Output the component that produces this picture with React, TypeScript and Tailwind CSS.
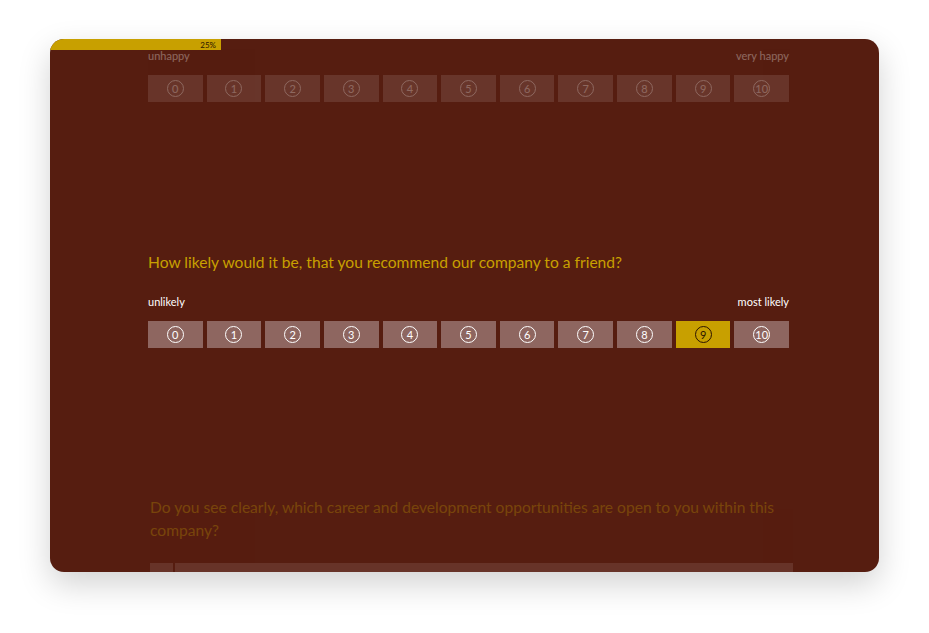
import { useState } from "react";

const scale = [0, 1, 2, 3, 4, 5, 6, 7, 8, 9, 10];

function Scale({ low, high, value, onPick }: { low: string; high: string; value?: number; onPick?: (n: number) => void }) {
  return (
    <div>
      <div className="flex justify-between text-[11px] leading-4 text-white">
        <span>{low}</span>
        <span>{high}</span>
      </div>
      <div className="mt-[11px] flex gap-[4px]">
        {scale.map((n) => {
          const active = n === value;
          return (
            <button
              key={n}
              onClick={() => onPick?.(n)}
              className={
                "flex h-[27px] flex-1 items-center justify-center " +
                (active ? "bg-[#c8a000]" : "bg-[#8e6660]")
              }
            >
              <span
                className={
                  "flex h-[17px] w-[17px] items-center justify-center rounded-full border-[1.5px] text-[11px] leading-none " +
                  (active ? "border-[#2b1400] text-[#2b1400]" : "border-white text-white")
                }
              >
                {n}
              </span>
            </button>
          );
        })}
      </div>
    </div>
  );
}

export default function App() {
  const [pick, setPick] = useState(9);

  return (
    <div className="min-h-screen bg-white pt-[39px] pl-[50px] font-['Lato','Noto_Sans',sans-serif]">
      <div className="relative h-[533px] w-[829px] overflow-hidden rounded-[14px] bg-[#561d10] shadow-[0_12px_32px_rgba(0,0,0,0.18)]">
        <div className="absolute left-0 top-0 z-10 flex h-[11px] w-[171px] items-center justify-end bg-[#c8a000] pr-[5px]">
          <span className="text-[8px] leading-none text-[#2b1400]">25%</span>
        </div>

        <div className="ml-[98px] w-[641px]">
          <div className="pt-[9px] opacity-[0.33]">
            <Scale low="unhappy" high="very happy" />
          </div>

          <div className="mt-[148px]">
            <h2 className="text-[15.6px] leading-6 text-[#c8a000]">
              How likely would it be, that you recommend our company to a friend?
            </h2>
            <div className="mt-[20px]">
              <Scale low="unlikely" high="most likely" value={pick} onPick={setPick} />
            </div>
          </div>

          <div className="ml-[2px] mt-[148px] w-[643px] opacity-30">
            <h2 className="text-[15.6px] leading-[23px] text-[#c8a000]">
              Do you see clearly, which career and development opportunities are open to you within this company?
            </h2>
            <div className="mt-[21px] flex h-[30px] gap-[2px]">
              <div className="w-[23px] bg-[#8e6660]" />
              <div className="flex-1 bg-[#8e6660]" />
            </div>
          </div>
        </div>
      </div>
    </div>
  );
}
